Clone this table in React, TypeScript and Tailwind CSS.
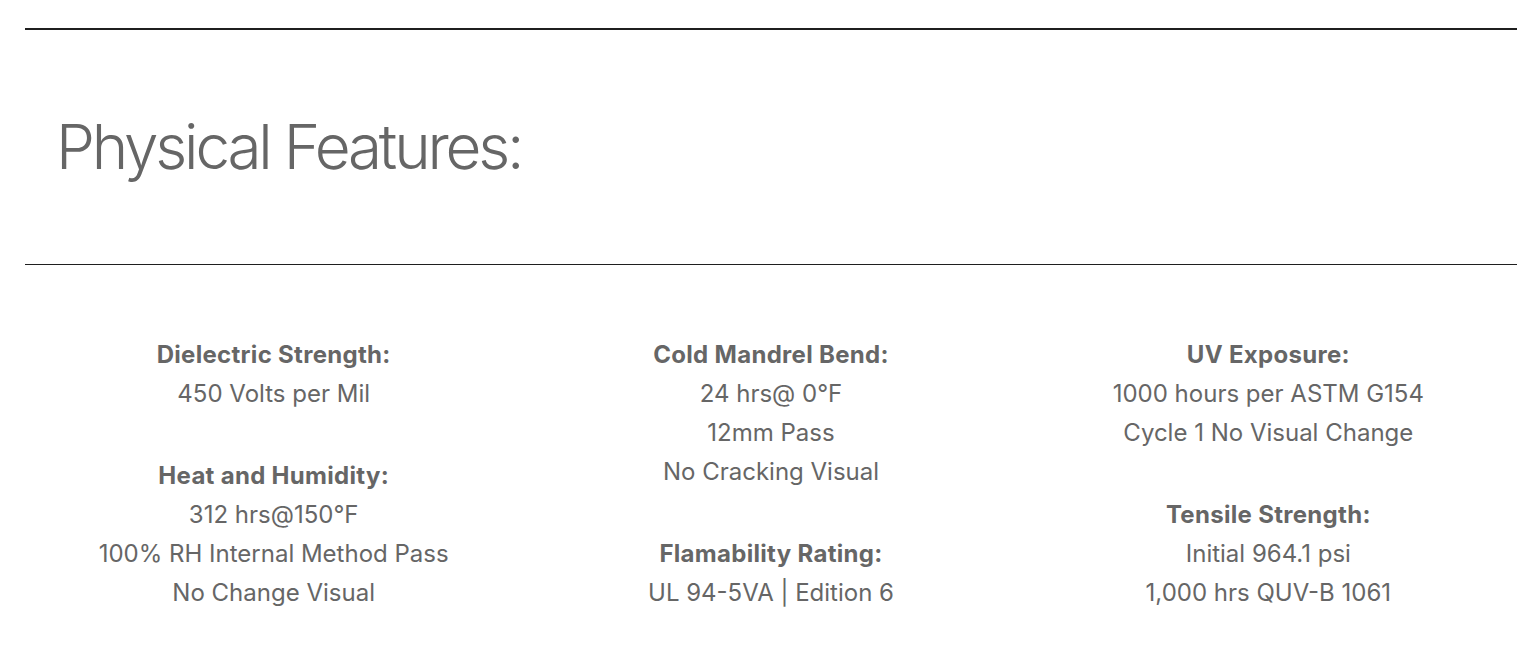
const columns: { title: string; lines: string[] }[][] = [
  [
    { title: "Dielectric Strength:", lines: ["450 Volts per Mil"] },
    {
      title: "Heat and Humidity:",
      lines: ["312 hrs@150°F", "100% RH Internal Method Pass", "No Change Visual"],
    },
  ],
  [
    {
      title: "Cold Mandrel Bend:",
      lines: ["24 hrs@ 0°F", "12mm Pass", "No Cracking Visual"],
    },
    { title: "Flamability Rating:", lines: ["UL 94-5VA | Edition 6"] },
  ],
  [
    {
      title: "UV Exposure:",
      lines: ["1000 hours per ASTM G154", "Cycle 1 No Visual Change"],
    },
    {
      title: "Tensile Strength:",
      lines: ["Initial 964.1 psi", "1,000 hrs QUV-B 1061"],
    },
  ],
];

export default function App() {
  return (
    <main className="min-h-screen bg-white pl-[25px] pr-[19px] pt-[28px] text-[#666666] font-['Inter',sans-serif]">
      <div className="h-[1.5px] bg-[#1f1f1f]" />

      {/* Section heading */}
      <div className="flex h-[234px] items-center pl-[31px]">
        <h2 className="text-[62px] font-light leading-none tracking-[-3.2px]">
          Physical Features:
        </h2>
      </div>

      <div className="h-[1.5px] bg-[#1f1f1f]" />

      {/* Specs grid */}
      <div className="grid grid-cols-3 pt-[70px] text-center text-[24px] leading-[39px]">
        {columns.map((col, i) => (
          <div key={i} className="flex flex-col gap-[43px]">
            {col.map((block) => (
              <div key={block.title}>
                <p className="font-bold tracking-[0.3px]">{block.title}</p>
                {block.lines.map((line) => (
                  <p key={line}>{line}</p>
                ))}
              </div>
            ))}
          </div>
        ))}
      </div>
    </main>
  );
}
